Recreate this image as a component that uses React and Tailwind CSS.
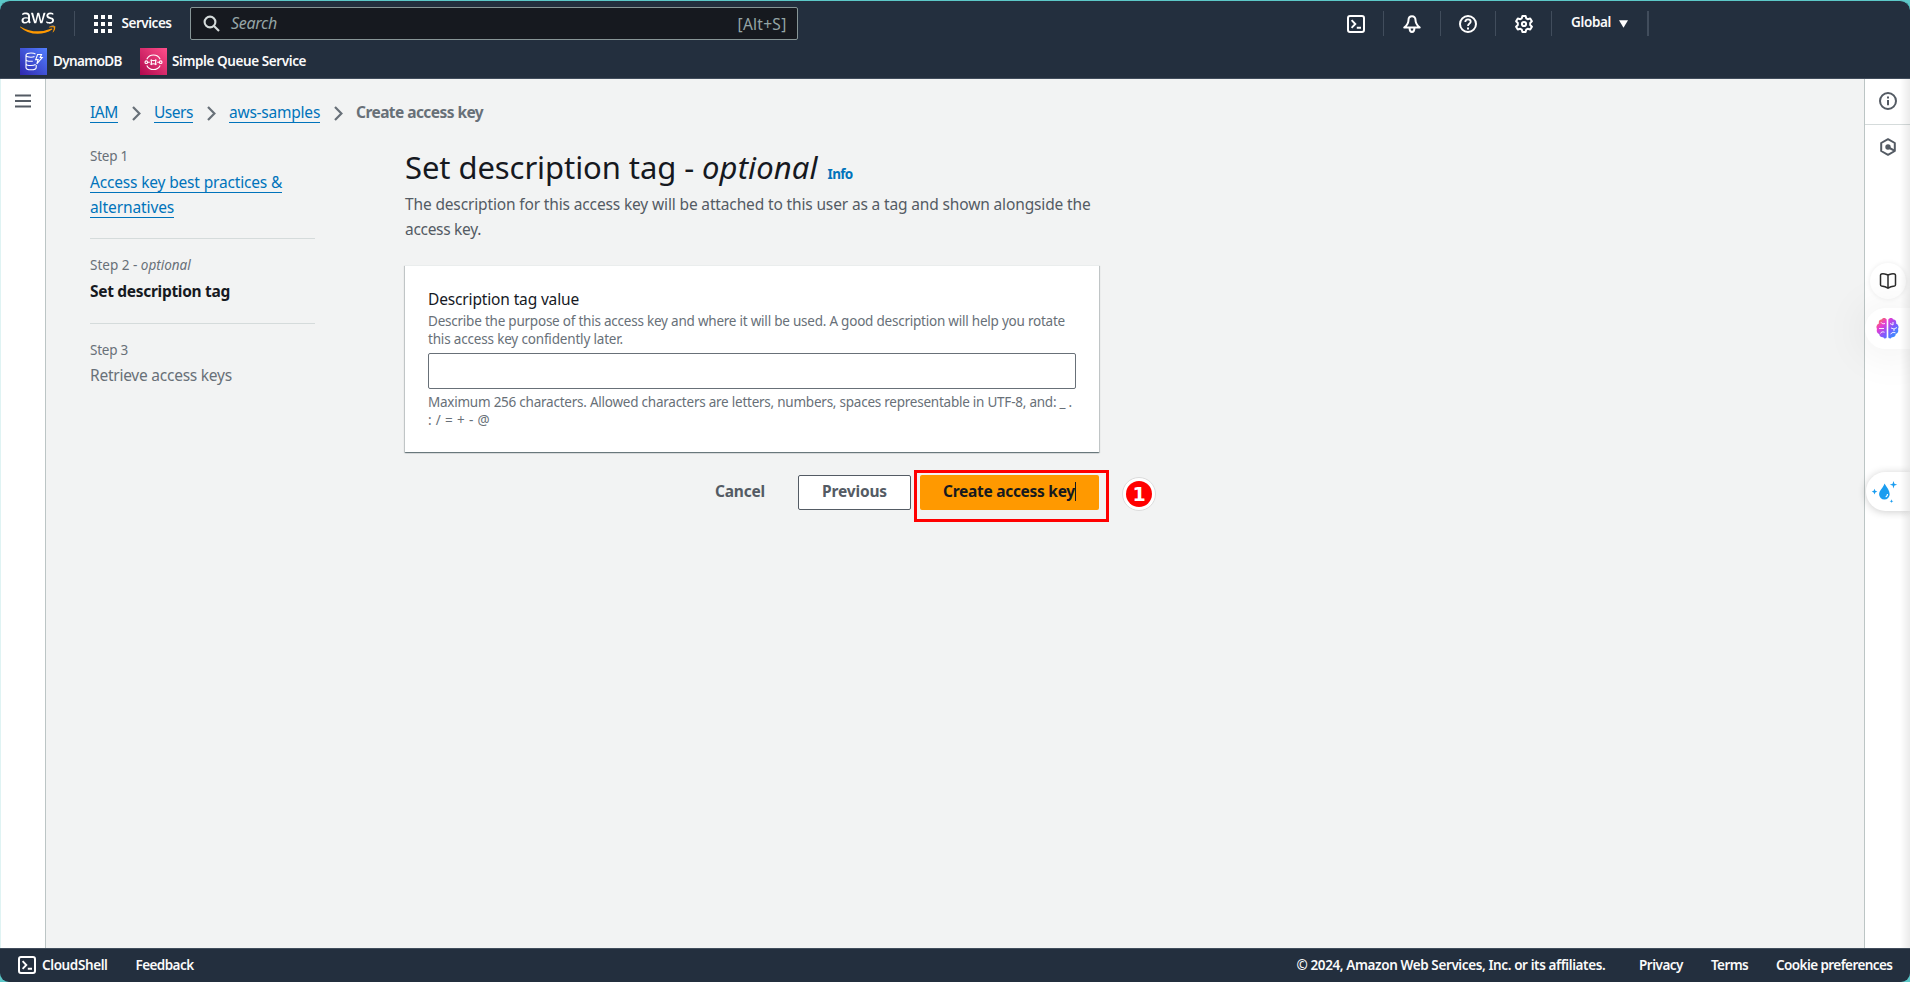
import { FaAws } from "react-icons/fa";

function Chevron() {
  return (
    <svg className="ml-[14px] mr-[13px] mt-[6px] h-[15px] w-[9px] shrink-0" viewBox="0 0 9 15" fill="none" stroke="#687078" strokeWidth="2.2">
      <path d="M1 1 7.400 7.500 1 14" />
    </svg>
  );
}

function Terminal({ size }) {
  return (
    <svg width={size} height={size} viewBox="0 0 18 18" fill="none" stroke="#fff" strokeWidth="2">
      <rect x="1" y="1" width="16" height="16" rx="2" />
      <path d="M4.6 5.2 8.3 9l-3.7 3.8M9.8 12.800h4.2" strokeWidth="1.9" />
    </svg>
  );
}

function Sep({ className = "" }) {
  return <span className={"h-[25px] w-px bg-[#414d5c] " + className} />;
}

function Header() {
  return (
    <header className="flex h-[79px] flex-col rounded-t-[10px] border-b border-[#414d5c] border-t-[#5cc8c8] border-t bg-[#232f3e] text-[13.5px] font-semibold leading-[18px] text-[#fafafa]">
      <div className="flex h-[45px] items-start">
        <div className="ml-[20px] mt-[8px] grid h-[29px] w-[36px]">
          <FaAws className="col-start-1 row-start-1 h-[28.4px] w-[35.5px] text-white [clip-path:inset(0_0_39%_0)]" />
          <FaAws className="col-start-1 row-start-1 h-[28.4px] w-[35.5px] text-[#f90] [clip-path:inset(61%_0_0_0)]" />
        </div>
        <Sep className="ml-[18px] mt-[10px]" />
        <svg className="ml-[19px] mt-[14px] h-[18px] w-[18px]" viewBox="0 0 18 18" fill="#fff">
          {[0, 7, 14].map((y) => [0, 7, 14].map((x) => <rect key={x + "-" + y} x={x} y={y} width="4" height="4" />))}
        </svg>
        <span className="ml-[9.5px] mt-[13px] w-[68.5px] tracking-[-0.46px]">Services</span>
        <div className="mt-[6px] flex h-[33px] w-[608px] items-center rounded-[2px] border border-[#879596] bg-[#16191f] pl-[12px] pr-[10.500px] font-normal text-[#95a5a6]">
          <svg className="h-[17px] w-[17px]" viewBox="0 0 17 17" fill="none" stroke="#d5dbdb" strokeWidth="2.1">
            <circle cx="7" cy="7" r="5.4" />
            <path d="m11 11 5 5" />
          </svg>
          <span className="-mt-px ml-[11px] text-[16px] italic tracking-[-0.29px]">Search</span>
          <span className="ml-auto mt-px text-[15.5px] tracking-[0.27px]">[Alt+S]</span>
        </div>
        <div className="ml-[549px] mt-[14px]"><Terminal size={18} /></div>
        <Sep className="ml-[18px] mt-[10px]" />
        <svg className="ml-[19px] mt-[14px] h-[18px] w-[18px]" viewBox="0 0 18 18" fill="none" stroke="#fff" strokeWidth="2" strokeLinejoin="round">
          <path d="M9 1.300C6.700 1.300 5.500 3 5.500 5c0 3.500-1.500 5.300-4.200 7.600h15.400C14 10.300 12.500 8.500 12.500 5c0-2-1.200-3.700-3.500-3.700ZM6.600 13.200c0 2.500.9 3.800 2.400 3.800s2.400-1.300 2.400-3.800" />
        </svg>
        <Sep className="ml-[19px] mt-[10px]" />
        <svg className="ml-[18px] mt-[14px] h-[18px] w-[18px]" viewBox="0 0 18 18" fill="none" stroke="#fff" strokeWidth="2">
          <circle cx="9" cy="9" r="8" />
          <path d="M6.300 7c0-1.600 1.100-2.600 2.700-2.600s2.700 1 2.700 2.400C11.700 8.500 9 8.600 9 11" strokeWidth="1.800" />
          <path d="M9 12.400v2" />
        </svg>
        <Sep className="ml-[18px] mt-[10px]" />
        <svg className="ml-[19px] mt-[14px] h-[18px] w-[18px]" viewBox="0 0 18 18" fill="none" stroke="#fff" strokeWidth="2" strokeLinejoin="round">
          <path d="M7.400 1h3.200l.6 2.300 1.500.9 2.500-.7 1.700 2.800L15.200 8v2l1.700 1.700-1.700 2.800-2.500-.7-1.500.9-.6 2.300H7.400l-.6-2.300-1.500-.9-2.500.7-1.700-2.800L2.800 10V8L1.100 6.300l1.700-2.800 2.500.7 1.500-.9Z" />
          <circle cx="9" cy="9" r="2.100" />
        </svg>
        <Sep className="ml-[18px] mt-[10px]" />
        <span className="ml-[19px] mt-[12px] w-[41px] tracking-[-0.35px]">Global</span>
        <svg className="ml-[6.500px] mt-[18.500px] h-[8px] w-[9px]" viewBox="0 0 9 8" fill="#fff"><path d="M0 .3h9L4.500 7.800Z" /></svg>
        <span className="ml-[19.500px] mt-[10px] h-[25px] w-[1.500px] bg-[#414d5c]" />
      </div>
      <div className="ml-[20px] mt-[2px] flex h-[27px] items-center">
        <svg className="h-[27px] w-[27px]" viewBox="0 0 27 27" fill="none" stroke="#fff" strokeWidth="1.100">
          <defs>
            <linearGradient id="ddb" x1="0" y1="1" x2="1" y2="0"><stop stopColor="#2e27ad" /><stop offset="1" stopColor="#527fff" /></linearGradient>
          </defs>
          <rect width="27" height="27" fill="url(#ddb)" stroke="none" />
          <path d="M15.500 6.200C14.500 5.300 12.700 5 11 5 8.200 5 6 5.900 6 7.100v12.300c0 1.300 2.200 2.300 5 2.300s5.200-1 5.200-2.300V17M6 7.100c0 1.200 2.200 2.100 5 2.100 1.400 0 2.600-.2 3.500-.6M6 11.200c0 1.200 2.200 2.100 5 2.100h1.800M6 15.400c0 1.200 2.200 2.100 5 2.100 2 0 3.800-.5 4.600-1.200M17.600 6.500h3.900l-1.300 3h2l-5.400 6.300 1.300-4.200h-2.400Z" />
        </svg>
        <span className="-mt-px ml-[6px] w-[87px] tracking-[-0.62px]">DynamoDB</span>
        <svg className="h-[27px] w-[27px]" viewBox="0 0 27 27" fill="none" stroke="#fff" strokeWidth="1.100">
          <defs>
            <linearGradient id="sqs" x1="0" y1="1" x2="1" y2="0"><stop stopColor="#b0084d" /><stop offset="1" stopColor="#ff4f8b" /></linearGradient>
          </defs>
          <rect width="27" height="27" fill="url(#sqs)" stroke="none" />
          <path d="M6.800 11.200a7.500 7.500 0 0 1 13.400 0M6.800 17.400a7.500 7.500 0 0 0 13.400 0" />
          <circle cx="6.300" cy="14.200" r="1.300" /><circle cx="20.700" cy="14.200" r="1.300" />
          <path d="M10.800 11.600c1.700 1.300 3.700 1.300 5.400 0-1 1.700-1 3.500 0 5.200-1.700-1.300-3.700-1.300-5.400 0 1-1.700 1-3.500 0-5.200ZM8 14.200h1.800M17.200 14.200H19" />
        </svg>
        <span className="-mt-px ml-[5px] tracking-[-0.4px]">Simple Queue Service</span>
      </div>
    </header>
  );
}

function Steps() {
  const link = "border-b border-[#0073bb]";
  return (
    <aside className="mt-[22px] w-[225px] text-[13.5px] leading-[18px] text-[#687078]">
      <p className="tracking-[-0.24px]">Step 1</p>
      <p className="mt-[4.500px] flex h-[50px] flex-col items-start text-[15.5px] leading-[25px] tracking-[-0.17px] text-[#0073bb]">
        <a className={link + " mb-[2px] h-[23px] whitespace-nowrap"}>Access key best practices &amp;</a>
        <a className={link + " h-[23px] tracking-[-0.1px]"}>alternatives</a>
      </p>
      <div className="mt-[18.500px] h-px bg-[#d5dbdb]" />
      <p className="mt-[17px]">Step 2 - <i>optional</i></p>
      <p className="mt-[4.500px] text-[15.5px] font-bold leading-[25px] tracking-[-0.3px] text-[#16191f]">Set description tag</p>
      <div className="mt-[19.500px] h-px bg-[#d5dbdb]" />
      <p className="mt-[17px] tracking-[-0.24px]">Step 3</p>
      <p className="mt-[3.500px] text-[15.5px] leading-[25px] tracking-[-0.24px]">Retrieve access keys</p>
    </aside>
  );
}

function Form() {
  return (
    <section className="ml-[90px] mt-[22px] w-[694px]">
      <div className="flex h-[40px] items-baseline whitespace-pre">
        <h1 className="text-[31px] leading-[40px] tracking-[-0.08px] text-[#16191f]">Set description tag - <i className="tracking-[0.1px]">optional</i></h1>
        <a className="ml-[10px] text-[13.5px] font-bold leading-[18px] tracking-[-0.67px] text-[#0073bb]">Info</a>
      </div>
      <p className="mt-[4.500px] text-[15.5px] leading-[25px] tracking-[-0.145px] text-[#545b64]">
        <span className="whitespace-nowrap">The description for this access key will be attached to this user as a tag and shown alongside the</span>
        <br />
        <span className="tracking-[-0.3px]">access key.</span>
      </p>
      <div className="mt-[23.500px] h-[187px] border-t border-[#eaeded] bg-white px-[23px] pt-[21px] text-[13.5px] leading-[18px] text-[#687078] shadow-[0_1px_1px_0_rgba(0,28,36,0.4),1px_1px_1px_0_rgba(0,28,36,0.15),-1px_1px_1px_0_rgba(0,28,36,0.15)]">
        <p className="text-[15.5px] leading-[25px] tracking-[-0.15px] text-[#16191f]">Description tag value</p>
        <p className="whitespace-nowrap tracking-[-0.225px]">
          Describe the purpose of this access key and where it will be used. A good description will help you rotate<br />
          <span className="tracking-[-0.175px]">this access key confidently later.</span>
        </p>
        <div className="mt-[5px] h-[36px] rounded-[2px] border border-[#687078] bg-white" />
        <p className="mt-[4px] whitespace-nowrap tracking-[-0.238px]">
          Maximum 256 characters. Allowed characters are letters, numbers, spaces representable in UTF-8, and: _ .<br />
          <span className="tracking-[0.35px]">: / = + - @</span>
        </p>
      </div>
      <div className="relative mt-[23px] flex h-[35px] justify-end text-[15.5px] font-bold leading-[33px] text-[#545b64]">
        <span className="mr-[33px] tracking-[-0.2px]">Cancel</span>
        <button className="mr-[9px] h-[35px] w-[113px] rounded-[2px] border border-[#545b64] bg-white pb-[2px] leading-[31px] tracking-[-0.15px]">Previous</button>
        <button className="flex h-[35px] w-[179px] rounded-[2px] bg-[#f90] pl-[23px] text-[#16191f]">
          <span className="w-[132px] whitespace-nowrap text-left tracking-[-0.28px]">Create access key</span>
          <span className="mt-[7px] h-[19px] w-px bg-[#16191f]" />
        </button>
        <div className="absolute left-[509px] top-[-5px] h-[52px] w-[195px] border-[3px] border-[#f00]" />
        <div className="absolute left-[717px] top-[2px] flex h-[34px] w-[34px] items-center justify-center rounded-full border border-[#dcdcdc] bg-white">
          <div className="flex h-[26px] w-[26px] items-center justify-center rounded-full bg-[#f00] font-['DejaVu_Sans'] text-[19px] leading-[26px] text-white">1</div>
        </div>
      </div>
    </section>
  );
}

function RightRail() {
  return (
    <aside className="relative flex w-[46px] flex-col items-center border-l border-[#bcc5c5] bg-white">
      <div className="flex h-[46px] w-full items-center justify-center border-b border-[#d5dbdb] pb-px">
        <svg className="h-[18px] w-[18px]" viewBox="0 0 18 18" fill="none" stroke="#545b64" strokeWidth="2">
          <circle cx="9" cy="9" r="8" />
          <path d="M9 4.500v2M9 8v5.200" />
        </svg>
      </div>
      <svg className="mt-[13px] h-[18px] w-[18px]" viewBox="0 0 18 18" fill="none" stroke="#545b64" strokeWidth="2" strokeLinejoin="round">
        <path d="M9 1.200 15.800 5v8L9 16.800 2.200 13V5Z" />
        <circle cx="9" cy="9" r="1.700" fill="#545b64" />
        <path d="m9.500 9.500 6 3.200" />
      </svg>
      <div className="absolute left-[5px] top-[184px] flex h-[36px] w-[36px] items-center justify-center rounded-full bg-white shadow-[0_0_5px_rgba(0,0,0,0.08)]">
        <svg className="h-[18px] w-[18px]" viewBox="0 0 18 18" fill="none" stroke="#2b2b2b" strokeWidth="1.500" strokeLinejoin="round">
          <path d="M9 3.200C7.500 2 4 1.500 2.400 2c-.6.200-.9.500-.9 1.200v9.600c0 .7.300 1 1 1.100 2.200.200 4.500.8 6.500 2.300 2-1.500 4.300-2.100 6.500-2.300.7-.1 1-.4 1-1.100V3.200c0-.7-.3-1-.9-1.200C14 1.500 10.500 2 9 3.200Zm0 0v13" />
        </svg>
      </div>
      <div className="absolute right-0 top-[229px] flex h-[41px] w-[45px] items-center rounded-l-full bg-white pl-[11px] shadow-[0_2px_40px_8px_rgba(0,0,0,0.05)]">
        <svg className="h-[23px] w-[23px]" viewBox="0 0 23 23">
          <defs>
            <linearGradient id="brain" x1="0" y1="0" x2="1" y2="1">
              <stop stopColor="#ff8a1e" /><stop offset=".3" stopColor="#e93bd0" /><stop offset=".6" stopColor="#7b5cff" /><stop offset="1" stopColor="#16a8ff" />
            </linearGradient>
          </defs>
          <path fill="url(#brain)" d="M10.700 2.500C9.800.5 6.500.300 5.500 2.500 3.300 2.600 2.300 4.600 3 6.400.7 7.200-.3 10 1 12c-.8 2 .2 4.400 2.200 5 .2 2.300 2.200 3.500 4 3.200 1 1.800 3 1.600 3.500.100ZM12.300 2.500c.9-2 4.200-2.200 5.200 0 2.200.1 3.200 2.100 2.500 3.900 2.300.8 3.300 3.600 2 5.600.8 2-.2 4.400-2.200 5-.2 2.300-2.200 3.500-4 3.200-1 1.800-3 1.600-3.500.1Z" />
          <path fill="none" stroke="#fff" strokeWidth=".9" d="M5 5.300c.8 1.500 2.500 1.800 4 1.200M3 11.500h5M4.500 16.500c.5-1.700 2.500-2 4-1.200M14 6.500l3 1.500v-3M21 10.500l-3 1.500-3-1M18 12v2M14.500 17l2.500-1.700 2.500.5" />
        </svg>
      </div>
      <div className="absolute right-0 top-[393px] flex h-[39px] w-[44px] items-center rounded-l-full bg-white pl-[5px] shadow-[0_1px_8px_rgba(0,0,0,0.2)]">
        <svg className="h-[26px] w-[28px]" viewBox="0 0 28 26" fill="#1b9df0">
          <path d="M13.500 4.500c2.200 3.600 5.200 7 5.200 10.800a5.300 5.300 0 0 1-10.600 0C8.100 11.500 12.500 8.500 13.500 4.500Z" />
          <path fill="none" stroke="#fff" strokeWidth="1.200" d="M16.500 15c0 1.500-.6 2.500-1.800 3" />
          <path d="M22.500 2l.9 2.800 2.800.9-2.800.9-.9 2.800-.9-2.800-2.800-.9 2.800-.9ZM3.500 9.800l.8 2 2 .8-2 .8-.8 2-.8-2-2-.8 2-.8ZM20.500 20.300l.5 1.400 1.400.5-1.400.5-.5 1.400-.5-1.400-1.400-.5 1.400-.5Z" />
        </svg>
      </div>
      <div className="absolute right-0 top-0 h-full w-[10px] bg-gradient-to-r from-transparent to-black/8" />
    </aside>
  );
}

export default function App() {
  const crumb = "h-[23px] shrink-0 whitespace-nowrap border-b border-[#0073bb] text-[#0073bb]";
  return (
    <div className="flex h-[982px] w-[1910px] flex-col overflow-hidden bg-[#5cc8c8] font-['Noto_Sans','Open_Sans',sans-serif]">
      <Header />
      <main className="flex h-[869px] bg-[#f2f3f3]">
        <nav className="flex w-[46px] justify-center border-l border-r border-l-[#dff3f3] border-r-[#bcc5c5] bg-white pt-[15px]">
          <svg className="h-[15px] w-[16px]" viewBox="0 0 16 15" stroke="#545b64" strokeWidth="2"><path d="M0 1.500h16M0 7h16M0 12.500h16" /></svg>
        </nav>
        <div className="flex-1 pl-[44px] pt-[21px]">
          <div className="flex h-[25px] items-start text-[15.5px] leading-[25px]">
            <a className={crumb + " w-[28px] tracking-[-0.4px]"}>IAM</a>
            <Chevron />
            <a className={crumb + " w-[39px] tracking-[-0.46px]"}>Users</a>
            <Chevron />
            <a className={crumb + " w-[91px] tracking-[-0.23px]"}>aws-samples</a>
            <Chevron />
            <span className="whitespace-nowrap font-bold tracking-[-0.56px] text-[#687078]">Create access key</span>
          </div>
          <div className="flex">
            <Steps />
            <Form />
          </div>
        </div>
        <RightRail />
      </main>
      <footer className="flex h-[34px] items-center rounded-b-[9px] border-t border-[#414d5c] bg-[#232f3e] pb-[1px] pl-[18px] pr-[17px] text-[13.5px] font-semibold leading-[18px] text-[#fafafa]">
        <Terminal size={18} />
        <span className="ml-[6px] w-[93.500px] tracking-[-0.39px]">CloudShell</span>
        <span className="tracking-[-0.57px]">Feedback</span>
        <span className="ml-auto w-[342.500px] tracking-[-0.39px]">© 2024, Amazon Web Services, Inc. or its affiliates.</span>
        <span className="w-[72px] tracking-[-0.49px]">Privacy</span>
        <span className="w-[65px] tracking-[-0.62px]">Terms</span>
        <span className="w-[117px] whitespace-nowrap tracking-[-0.57px]">Cookie preferences</span>
      </footer>
    </div>
  );
}
